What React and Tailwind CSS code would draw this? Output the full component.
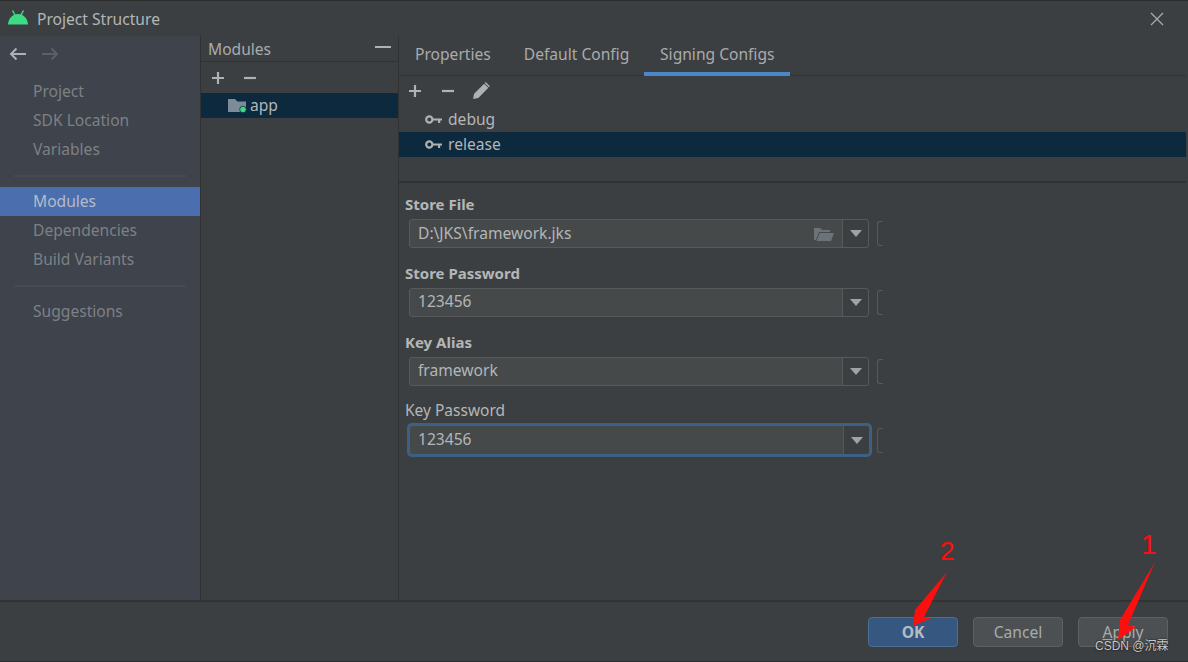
import React from "react";

const Plus = ({ c = "#afb1b3" }) => (
  <svg width="14" height="14" viewBox="0 0 14 14"><path d="M7 1v12M1 7h12" stroke={c} strokeWidth="2.200" /></svg>
);
const Minus = ({ c = "#afb1b3" }) => (
  <svg width="14" height="14" viewBox="0 0 14 14"><path d="M1 7h12" stroke={c} strokeWidth="2.200" /></svg>
);
const Key = () => (
  <svg width="17" height="11" viewBox="0 0 17 11">
    <circle cx="4.300" cy="5.500" r="3.100" fill="none" stroke="#afb1b3" strokeWidth="2.200" />
    <path d="M7 4.400h10v2.200h-1.800V9h-2.200V6.600H7z" fill="#afb1b3" />
  </svg>
);
const Caret = () => (
  <svg width="12" height="7" viewBox="0 0 12 7"><path d="M0 0h12L6 7z" fill="#a0a2a4" /></svg>
);

function Field({ label, value, bold, focus, folder, mt }) {
  return (
    <div className={mt}>
      <div className={`pl-[6px] leading-[20px] text-[#b4b6b8] ${bold ? "text-[15px] font-bold" : "text-[15.5px]"}`}>{label}</div>
      <div className="mt-[5px] flex items-center">
        <div
          className={`ml-[10px] flex rounded-[3px] bg-[#45494a] ${
            focus
              ? "h-[30px] w-[461px] border border-[#3d6185] shadow-[0_0_0_2px_#3d6185]"
              : "h-[29px] w-[460px] border border-[#565a5c]"
          }`}
        >
          <div className={`flex min-w-0 flex-1 items-center justify-between pl-[8px] pr-[8px] text-[15.6px] text-[#b4b6b8] ${folder ? "" : "pb-[1px]"}`}>
            <span>{value}</span>
            {folder && (
              <svg width="20" height="14" viewBox="0 0 20 14">
                <path d="M0 13V1h6l2 2h8v2H5L2 13z" fill="#6b7378" />
                <path d="M5.500 6H20l-3 8H2.500z" fill="#6b7378" />
              </svg>
            )}
          </div>
          <div className="flex w-[26px] items-center justify-center rounded-r-[3px] border-l border-[#565a5c] bg-[#3c3f41]">
            <Caret />
          </div>
        </div>
        <div className={`h-[25px] w-[6px] rounded-l-[3px] border-y border-l border-[#565a5c] ${focus ? "ml-[7px]" : "ml-[8px]"}`} />
      </div>
    </div>
  );
}

const SideItem = ({ children, active }) => (
  <div className={`flex h-[29px] items-center pl-[33px] text-[15.6px] ${active ? "bg-[#4b6eaf] text-[#b4bcc8]" : "text-[#7d8185]"}`}>
    {children}
  </div>
);
const Sep = ({ cls }) => <div className={`mx-[14px] h-[2px] bg-[#464a52] ${cls}`} />;

export default function App() {
  return (
    <div className="relative flex h-[662px] w-[1188px] flex-col overflow-hidden bg-[#3c3f41] font-['Noto_Sans','Open_Sans',sans-serif]">
      <div className="h-[1px] bg-[#2b2b2b]" />
      {/* Title bar */}
      <div className="flex h-[35px] items-center pl-[8px] pr-[24px]">
        <svg width="20" height="15" viewBox="0 0 20 15" className="mb-[2px]">
          <path d="M0 14.500C0.400 8.500 4.500 4 10 4s9.600 4.500 10 10.500z" fill="#3ddc84" />
          <path d="M4.500 .5l2.500 4.500M15.500 .5L13 5" stroke="#3ddc84" strokeWidth="1.500" />
        </svg>
        <span className="ml-[9px] pt-[2px] text-[15.6px] text-[#b4b6b8]">Project Structure</span>
        <svg width="14" height="14" viewBox="0 0 14 14" className="ml-auto">
          <path d="M1 1l12 12M13 1L1 13" stroke="#a9abad" strokeWidth="1.300" />
        </svg>
      </div>

      {/* Body */}
      <div className="flex h-[566px] border-b-2 border-[#313335] pr-[2px]">
        {/* Sidebar */}
        <div className="w-[200px] bg-[#3e434c]">
          <div className="flex h-[41px] items-center gap-[14px] pl-[9px] pb-[6px]">
            <svg width="18" height="14" viewBox="0 0 18 14"><path d="M17 7H2M7.500 1.500L2 7l5.500 5.500" fill="none" stroke="#aeb0b2" strokeWidth="2" /></svg>
            <svg width="18" height="14" viewBox="0 0 18 14"><path d="M1 7h15M10.500 1.500L16 7l-5.500 5.500" fill="none" stroke="#5c6066" strokeWidth="2" /></svg>
          </div>
          <div>
            <SideItem>Project</SideItem>
            <SideItem>SDK Location</SideItem>
            <SideItem>Variables</SideItem>
          </div>
          <Sep cls="mt-[11px] mb-[10px]" />
          <SideItem active>Modules</SideItem>
          <SideItem>Dependencies</SideItem>
          <SideItem>Build Variants</SideItem>
          <Sep cls="mt-[11px] mb-[10px]" />
          <SideItem>Suggestions</SideItem>
        </div>
        <div className="w-[1px] bg-[#323232]" />

        {/* Modules list */}
        <div className="w-[197px]">
          <div className="flex h-[26px] items-center justify-between border-b border-[#323232] pl-[7px] pr-[7px] pt-[2px] text-[15.6px] text-[#a9abad]">
            <span>Modules</span>
            <svg width="16" height="4" viewBox="0 0 16 4" className="mb-[5px]"><path d="M0 2h16" stroke="#afb1b3" strokeWidth="2" /></svg>
          </div>
          <div className="flex h-[31px] items-center gap-[18px] pl-[10px]">
            <Plus />
            <Minus />
          </div>
          <div className="flex h-[25px] items-center bg-[#0d293e] pl-[27px] text-[15.6px] text-[#b4b6b8]">
            <svg width="19" height="15" viewBox="0 0 19 15">
              <path d="M0 1h7l2.500 2.500H18V14H0z" fill="#7b8b99" />
              <circle cx="15" cy="11.500" r="3.300" fill="#3ddc84" stroke="#0d293e" strokeWidth="0.800" />
            </svg>
            <span className="ml-[3px] pt-[1px]">app</span>
          </div>
        </div>
        <div className="w-[1px] bg-[#323232]" />

        {/* Right pane */}
        <div className="flex min-w-0 flex-1 flex-col">
          <div className="flex h-[40px] border-b border-[#323232] text-[15.6px] text-[#a9abad]">
            <div className="flex h-[39px] items-center pb-[2px] pl-[16px]">Properties</div>
            <div className="flex h-[39px] items-center pb-[2px] pl-[33px]">Default Config</div>
            <div className="ml-[15px] flex h-[40px] w-[146px] items-center justify-center border-b-[4px] border-[#4a88c7] pt-[1px]">Signing Configs</div>
          </div>
          <div className="flex h-[31px] items-center gap-[19px] pb-[2px] pl-[9px]">
            <Plus />
            <Minus />
            <svg width="19" height="19" viewBox="0 0 18 18" className="-ml-[2px]">
              <path d="M1 17l1-5L11.500 2.500l4 4L6 16z" fill="#afb1b3" />
              <path d="M13 1l4 4-1 1-4-4z" fill="#afb1b3" />
            </svg>
          </div>
          <div className="flex h-[25px] items-center pl-[26px] text-[15.6px] text-[#b4b6b8]">
            <Key /><span className="ml-[6px]">debug</span>
          </div>
          <div className="flex h-[25px] items-center bg-[#0d293e] pl-[26px] text-[15.6px] text-[#b4b6b8]">
            <Key /><span className="ml-[6px]">release</span>
          </div>
          <div className="mt-[24px] h-[2px] bg-[#323232]" />
          <div className="pt-[11px]">
            <Field label="Store File" value="D:\JKS\framework.jks" bold folder />
            <Field label="Store Password" value="123456" bold mt="mt-[15px]" />
            <Field label="Key Alias" value="framework" bold mt="mt-[15px]" />
            <Field label="Key Password" value="123456" focus mt="mt-[14px]" />
          </div>
        </div>
      </div>

      {/* Footer */}
      <div className="flex flex-1 items-start justify-end gap-[15px] pr-[20px] pt-[15px] text-[15.6px]">
        <button className="h-[30px] w-[90px] rounded-[4px] border border-[#4a6f94] bg-[#365880] pt-[2px] font-bold text-[#b4bcc4]">OK</button>
        <button className="h-[30px] w-[90px] rounded-[4px] border border-[#5e6163] bg-[#4c5052] pt-[2px] text-[#a9abad]">Cancel</button>
        <button className="h-[30px] w-[90px] rounded-[4px] border border-[#5e6163] bg-[#4c5052] pt-[2px] text-[#a9abad]"><span className="underline">A</span>pply</button>
      </div>
      <div className="h-[1px] bg-[#2b2b2b]" />

      {/* Annotations drawn over the screenshot */}
      <svg width="1188" height="662" viewBox="0 0 1188 662" className="pointer-events-none absolute left-0 top-0">
        <path d="M947 572L924 617l7 1L913 626l2-16z" fill="#fb1010" />
        <path d="M1155 562L1128 625l8 2L1118 640l2-20z" fill="#fb1010" />
      </svg>
      <span className="absolute left-[940px] top-[534px] font-['Liberation_Sans',sans-serif] text-[26px] leading-[34px] text-[#fb1010]">2</span>
      <span className="absolute left-[1141px] top-[528px] font-['Liberation_Sans',sans-serif] text-[28px] leading-[34px] text-[#fb1010]">1</span>
      <span className="absolute left-[1095px] top-[638px] font-['Liberation_Sans','Noto_Sans_CJK_SC',sans-serif] text-[12px] leading-[16px] text-[#c8c8c8] [text-shadow:0_0_2px_#000]">CSDN @沉霖</span>
    </div>
  );
}
